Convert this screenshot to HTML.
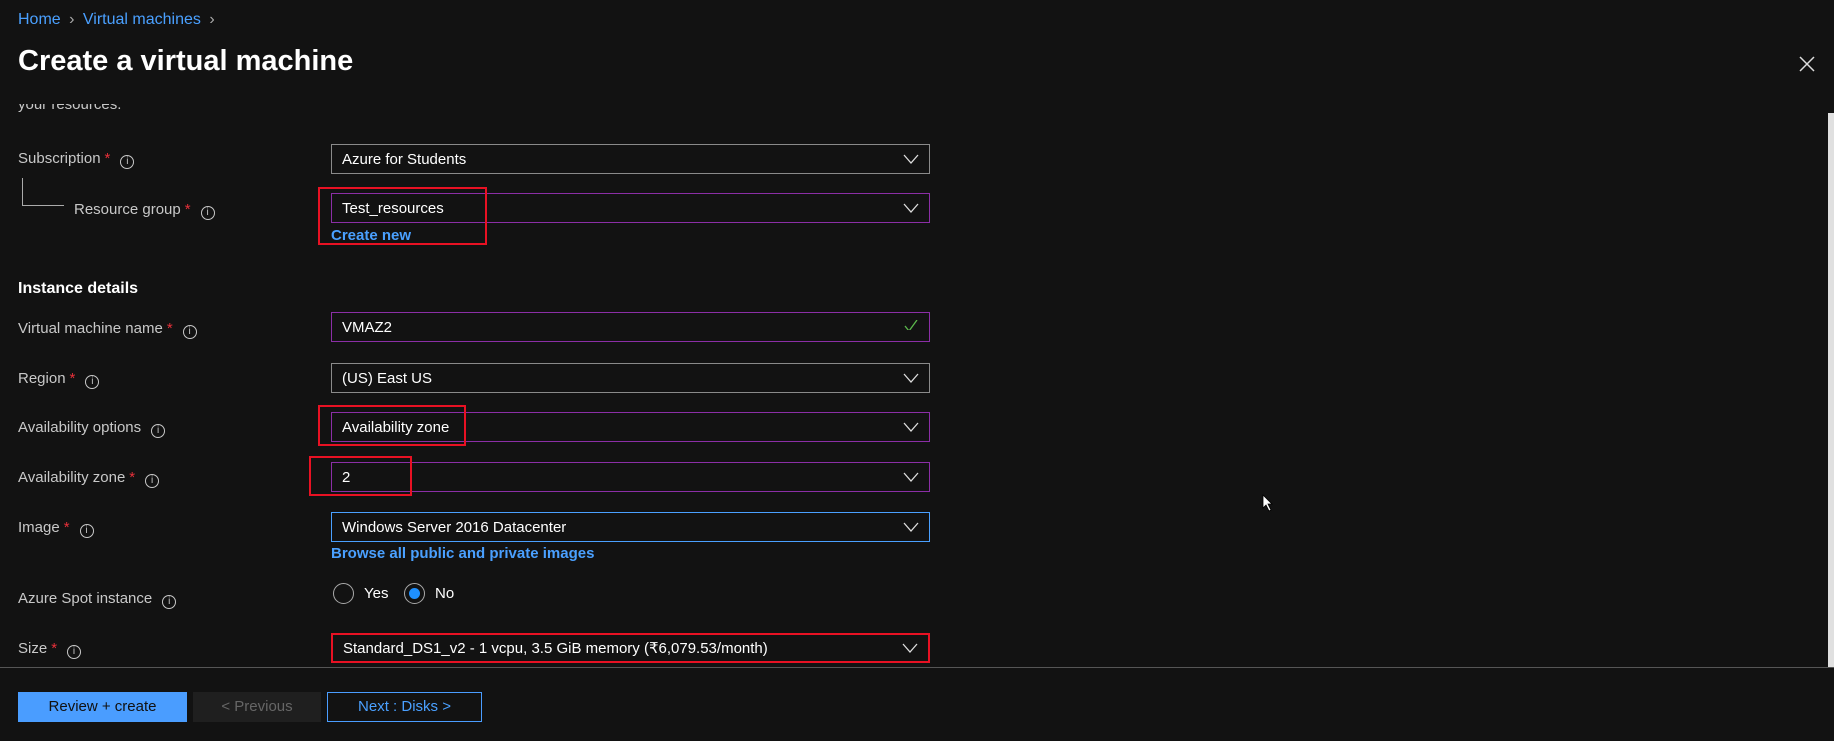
<!DOCTYPE html>
<html><head><meta charset="utf-8"><style>
*{box-sizing:border-box;margin:0;padding:0}
body{width:1834px;height:741px;background:#121212;font-family:"Liberation Sans",sans-serif;color:#fff;position:relative;overflow:hidden}
.a{position:absolute;white-space:nowrap}
.lbl{position:absolute;left:18px;font-size:15px;color:#c8c8c8}
.lbl .s{color:#e8303a;margin-left:4px}
.info{display:inline-block;width:14px;height:14px;border:1px solid #c8c8c8;border-radius:50%;font-size:10px;text-align:center;line-height:12px;margin-left:10px;vertical-align:-1px}
.box{position:absolute;left:331px;width:599px;height:30px;border:1px solid #8a8a8a;font-size:15px;padding-left:10px;line-height:30px;color:#fff}
.box.p{border-color:#8b2ea6}
.chev{position:absolute;right:10px;top:9px;width:16px;height:10px}
.red{position:absolute;border:2px solid #e81123}
.link{position:absolute;color:#4aa0ff;font-size:15px;font-weight:bold}
.btn{position:absolute;top:692px;height:30px;font-size:15px;text-align:center;line-height:30px}
</style></head><body>
<div class="a" style="left:18px;top:11px;font-size:16px;color:#4aa0ff">Home <span style="color:#aaa;margin:0 4px">›</span> Virtual machines <span style="color:#aaa;margin-left:4px">›</span></div>
<div class="a" style="left:18px;top:45px;font-size:29px;font-weight:bold">Create a virtual machine</div>
<svg class="a" style="left:1799px;top:56px" width="16" height="16"><path d="M1 1L15 15M15 1L1 15" stroke="#ddd" stroke-width="1.5"/></svg>
<div class="a" style="left:1828px;top:113px;width:6px;height:554px;background:#e0e0e0"></div>
<div class="a" style="left:18px;top:104px;height:10px;width:200px;overflow:hidden"><div class="a" style="left:0;top:-8px;font-size:15px;color:#c8c8c8">your resources.</div></div>

<div class="lbl" style="top:150px">Subscription<span class="s">*</span><span class="info">i</span></div>
<div class="box" style="top:144px">Azure for Students<svg class="chev"><path d="M1 1L8 9L15 1" stroke="#ddd" fill="none" stroke-width="1.3"/></svg></div>
<div class="a" style="left:22px;top:178px;width:42px;height:28px;border-left:1px solid #aaa;border-bottom:1px solid #aaa"></div>
<div class="lbl" style="left:74px;top:201px">Resource group<span class="s">*</span><span class="info">i</span></div>
<div class="box p" style="top:193px">Test_resources<svg class="chev"><path d="M1 1L8 9L15 1" stroke="#ddd" fill="none" stroke-width="1.3"/></svg></div>
<div class="link" style="left:331px;top:227px">Create new</div>
<div class="red" style="left:318px;top:187px;width:169px;height:58px"></div>

<div class="a" style="left:18px;top:280px;font-size:16px;font-weight:bold">Instance details</div>
<div class="lbl" style="top:320px">Virtual machine name<span class="s">*</span><span class="info">i</span></div>
<div class="box p" style="top:312px">VMAZ2<svg class="chev" style="top:7px"><path d="M2 6L6 11L14 0" stroke="#5bb84c" fill="none" stroke-width="1.3"/></svg></div>
<div class="lbl" style="top:370px">Region<span class="s">*</span><span class="info">i</span></div>
<div class="box" style="top:363px">(US) East US<svg class="chev"><path d="M1 1L8 9L15 1" stroke="#ddd" fill="none" stroke-width="1.3"/></svg></div>
<div class="lbl" style="top:419px">Availability options<span class="info">i</span></div>
<div class="box p" style="top:412px">Availability zone<svg class="chev"><path d="M1 1L8 9L15 1" stroke="#ddd" fill="none" stroke-width="1.3"/></svg></div>
<div class="red" style="left:318px;top:405px;width:148px;height:41px"></div>
<div class="lbl" style="top:469px">Availability zone<span class="s">*</span><span class="info">i</span></div>
<div class="box p" style="top:462px">2<svg class="chev"><path d="M1 1L8 9L15 1" stroke="#ddd" fill="none" stroke-width="1.3"/></svg></div>
<div class="red" style="left:309px;top:456px;width:103px;height:40px"></div>
<div class="lbl" style="top:519px">Image<span class="s">*</span><span class="info">i</span></div>
<div class="box" style="top:512px;border-color:#4aa0ff">Windows Server 2016 Datacenter<svg class="chev"><path d="M1 1L8 9L15 1" stroke="#ddd" fill="none" stroke-width="1.3"/></svg></div>
<div class="link" style="left:331px;top:545px">Browse all public and private images</div>
<div class="lbl" style="top:590px">Azure Spot instance<span class="info">i</span></div>
<div class="a" style="left:333px;top:583px;width:21px;height:21px;border:1px solid #aaa;border-radius:50%"></div>
<div class="a" style="left:364px;top:585px;font-size:15px">Yes</div>
<div class="a" style="left:404px;top:583px;width:21px;height:21px;border:1px solid #aaa;border-radius:50%"><div style="margin:4px;width:11px;height:11px;border-radius:50%;background:#1e90ff"></div></div>
<div class="a" style="left:435px;top:585px;font-size:15px">No</div>
<div class="lbl" style="top:640px">Size<span class="s">*</span><span class="info">i</span></div>
<div class="box" style="top:633px;border:2px solid #e81123;line-height:28px">Standard_DS1_v2 - 1 vcpu, 3.5 GiB memory (₹6,079.53/month)<svg class="chev" style="top:8px"><path d="M1 1L8 9L15 1" stroke="#ddd" fill="none" stroke-width="1.3"/></svg></div>

<div class="a" style="left:0;top:667px;width:1834px;height:1px;background:#555"></div>
<div class="btn" style="left:18px;width:169px;background:#4a9dff;color:#111">Review + create</div>
<div class="btn" style="left:193px;width:128px;background:#1f1f1f;color:#666">&lt; Previous</div>
<div class="btn" style="left:327px;width:155px;border:1px solid #4a9dff;color:#4aa0ff;line-height:28px">Next : Disks &gt;</div>
<svg class="a" style="left:1262px;top:494px" width="12" height="18"><path d="M1 1L1 14L4 11L7 17L9 16L6 10L10 10Z" fill="#fff" stroke="#000" stroke-width="0.8"/></svg>
</body></html>
